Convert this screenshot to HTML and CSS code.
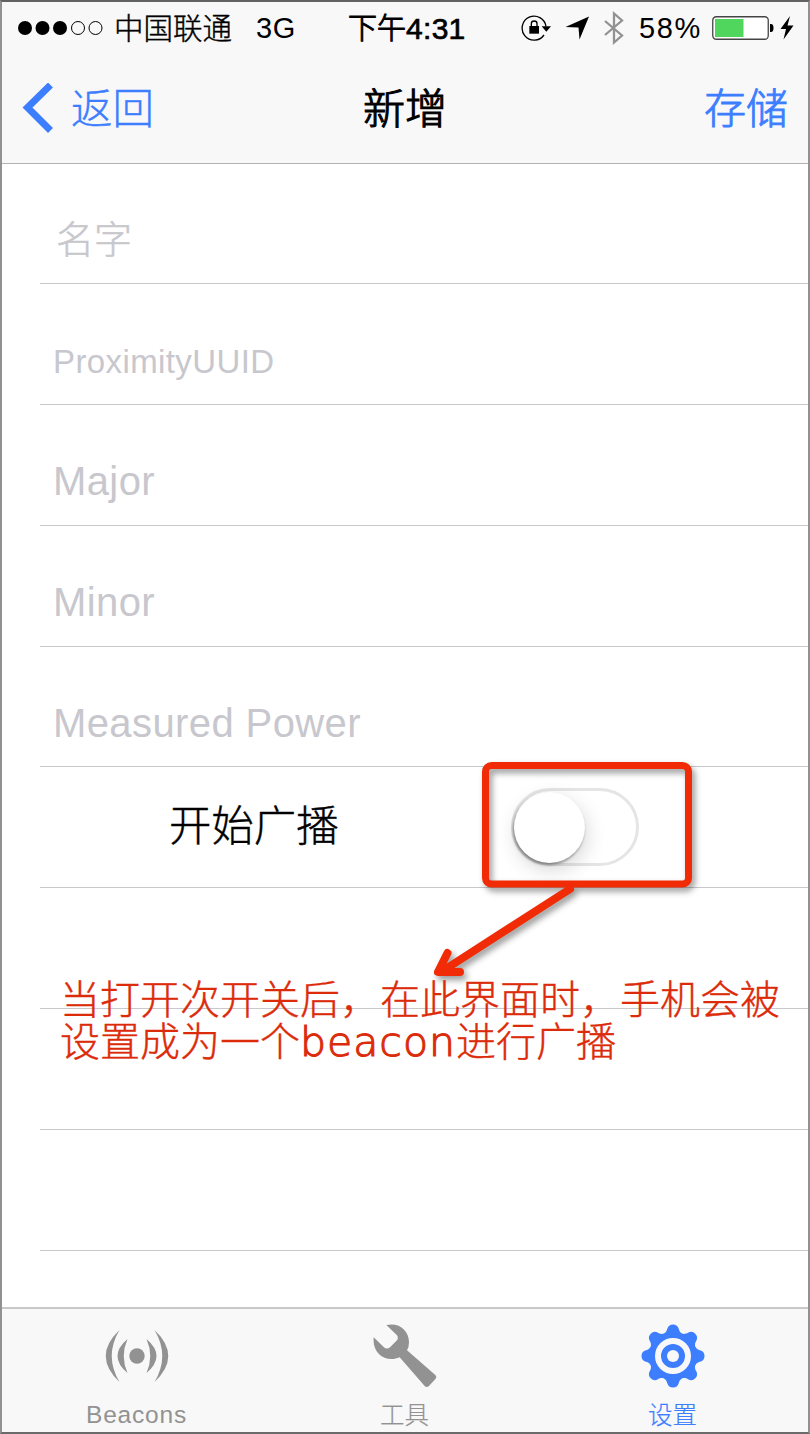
FILE: index.html
```html
<!DOCTYPE html>
<html lang="zh-CN">
<head>
<meta charset="utf-8">
<title>新增</title>
<link rel="stylesheet" href="styles.css">
</head>
<body>
<div class="screen">
  <header class="header">
    <div class="status">
      <svg class="signal" width="88" height="16" viewBox="0 0 88 16">
        <g fill="#000"><circle cx="8" cy="8" r="7"/><circle cx="25.500" cy="8" r="7"/><circle cx="43" cy="8" r="7"/></g>
        <g fill="none" stroke="#000" stroke-width="1"><circle cx="61" cy="8" r="6.500"/><circle cx="78.500" cy="8" r="6.500"/></g>
      </svg>
      <span class="carrier">中国联通</span>
      <span class="network">3G</span>
      <span class="time">下午<b class="clock">4:31</b></span>
      <svg class="lock" width="30" height="28" viewBox="34 40 90 84">
        <path d="M109 77A36 36 0 1 0 103 103" fill="none" stroke="#000" stroke-width="4"/>
        <path d="M96 77H124L110 93Z"/>
        <path d="M59 76H88V99H59Z"/>
        <path d="M65 77V69Q65 61 73.500 61Q82 61 82 69V77" fill="none" stroke="#000" stroke-width="4"/>
      </svg>
      <svg class="locate" width="24" height="24" viewBox="0 0 24 24"><path d="M.5 11L24 .5L14.500 23.500L13.500 11.500Z"/></svg>
      <svg class="bluetooth" width="22" height="34" viewBox="0 0 22 34"><path d="M2 10L19 24.500L11 31.500V2.500L19 9.500L2 24" fill="none" stroke="#929292" stroke-width="2.300"/></svg>
      <span class="percent">58%</span>
      <svg class="battery" width="63" height="24" viewBox="0 0 63 24">
        <rect x=".75" y=".75" width="55.500" height="22.500" rx="3.500" fill="#fff" stroke="#444" stroke-width="1.300"/>
        <rect x="3" y="3" width="28.500" height="18" fill="#50d65c"/>
        <path d="M58 8H59Q61.500 8 61.500 12T59 16H58Z"/>
      </svg>
      <svg class="bolt" width="14" height="24" viewBox="0 0 14 24"><path d="M10 0L.5 13H6L3.500 23.500L13.500 9.500H7.500Z"/></svg>
    </div>
    <nav class="nav">
      <span class="back">
        <svg width="32" height="50" viewBox="0 0 32 50"><path d="M28.500 2L5.500 24.500L28.500 47.500" fill="none" stroke="#3d7eff" stroke-width="7"/></svg>
        <span class="back-text">返回</span>
      </span>
      <span class="title">新增</span>
      <span class="save">存储</span>
    </nav>
  </header>

  <main class="form">
    <div class="row"><span class="hint cjk">名字</span></div>
    <div class="row"><span class="hint uuid">ProximityUUID</span></div>
    <div class="row"><span class="hint">Major</span></div>
    <div class="row"><span class="hint">Minor</span></div>
    <div class="row"><span class="hint">Measured Power</span></div>
    <div class="row switch-row"><span class="label">开始广播</span><span class="switch"><span class="knob"></span></span></div>
    <div class="row"></div>
    <div class="row"></div>
    <div class="row"></div>
  </main>

  <footer class="tabs">
    <div class="tab">
      <svg width="66" height="66" viewBox="-33 -33 66 66" fill="#929292">
        <circle r="7.700"/>
        <g id="waves"><path d="M-9.500 -17Q-29.500 0 -9.500 17Q-17 0 -9.500 -17Z"/><path d="M-17.500 -26Q-45 0 -17.500 26Q-33 0 -17.500 -26Z"/></g>
        <use href="#waves" transform="scale(-1 1)"/>
      </svg>
      <span class="tab-text en">Beacons</span>
    </div>
    <div class="tab">
      <svg width="66" height="66" viewBox="126 71 198 198"><path fill="#929292" d="M169 77C208 68 237 94 237 128Q237 144 231 153L316 227Q321 232 317 238L296 261Q290 266 284 260L209 174C170 191 126 166 131 114L161 143Q170 152 180 144L201 123Q206 116 201 108Z"/></svg>
      <span class="tab-text">工具</span>
    </div>
    <div class="tab active">
      <svg width="66" height="66" viewBox="-33 -33 66 66" fill="#3d7eff">
        <circle r="24"/>
        <g id="teeth"><path id="tooth" d="M-12 -20C-8 -23 -6.500 -24 -5.800 -27Q-4.500 -31.500 0 -31.500Q4.500 -31.500 5.800 -27C6.500 -24 8 -23 12 -20Z"/><use href="#tooth" transform="rotate(90)"/><use href="#tooth" transform="rotate(180)"/><use href="#tooth" transform="rotate(270)"/></g>
        <use href="#teeth" transform="rotate(45)"/>
        <circle r="15" fill="none" stroke="#f8f8f8" stroke-width="6"/>
        <circle r="6" fill="#f8f8f8"/>
      </svg>
      <span class="tab-text">设置</span>
    </div>
  </footer>

  <svg class="callout" width="270" height="230" viewBox="430 755 270 230">
    <g fill="none" stroke="#f02b05" stroke-linecap="round" stroke-linejoin="round">
      <rect x="485.500" y="765.500" width="203" height="118.500" rx="6" stroke-width="7"/>
      <path d="M570 889L441 972M447.500 953L438 972H460" stroke-width="8"/>
    </g>
  </svg>
  <p class="note">当打开次开关后，在此界面时，手机会被<br>设置成为一个<span class="beacon">beacon</span>进行广播</p>
</div>
</body>
</html>
```
FILE: styles.css
```css
* { box-sizing: border-box; }

body {
  margin: 0;
  font-family: "Liberation Sans", "Noto Sans CJK SC", sans-serif;
  font-weight: 300;
}

svg { display: block; flex: none; }
span { white-space: nowrap; }

.screen {
  position: relative;
  display: flex;
  flex-direction: column;
  width: 810px;
  height: 1434px;
  overflow: hidden;
  background: #fff;
  border: 2px solid #919191;
  border-top-color: #626262;
  border-bottom-color: #6a6a6a;
}

.header {
  height: 162px;
  background: #f8f8f8;
  border-bottom: 1px solid #b2b2b2;
}

.status {
  display: flex;
  align-items: center;
  height: 52px;
  padding-left: 15px;
  font-size: 29px;
  line-height: 52px;
}
.carrier { width: 119px; margin-left: 9px; padding-top: 2px; font-size: 29.5px; -webkit-text-stroke: .4px #000; }
.network { width: 40px; margin-left: 23px; letter-spacing: .6px; }
.time { width: 118px; margin-left: 52px; padding-top: 1px; font-size: 29px; -webkit-text-stroke: 1px #000; }
.clock { font-weight: 400; font-size: 30px; letter-spacing: .3px; -webkit-text-stroke: .7px #000; }
.lock { margin-left: 55px; }
.locate { margin-left: 14px; }
.bluetooth { margin-left: 14px; }
.percent { width: 63px; margin-left: 14px; letter-spacing: 1.6px; }
.battery { margin-left: 10px; }
.bolt { margin-left: 5px; }

.nav {
  display: grid;
  grid-template-columns: 1fr auto 1fr;
  align-items: center;
  height: 108px;
  padding: 0 20px;
  font-size: 42px;
  line-height: 104px;
  color: #3d7eff;
}
.back { display: flex; align-items: center; gap: 17px; }
.back-text { padding-top: 4px; font-size: 41.5px; -webkit-text-stroke: .4px #3d7eff; }
.title { padding-top: 4px; color: #000; -webkit-text-stroke: 1.1px #000; }
.save { justify-self: end; padding-top: 4px; -webkit-text-stroke: .9px #3d7eff; }

.form {
  height: 1143px;
  padding-left: 38px;
}
.row {
  display: flex;
  height: 120.85px;
  padding: 14px 0 0 13px;
  border-bottom: 1px solid #c8c7cc;
  line-height: 124px;
}
.row:first-child { height: 120px; }
.hint { color: #c7c7cd; font-size: 40px; letter-spacing: .4px; }
.hint.cjk { padding-left: 3px; font-size: 38px; letter-spacing: 0; -webkit-text-stroke: .5px #c7c7cd; }
.hint.uuid { padding-top: 2px; font-size: 33px; letter-spacing: .4px; }
.switch-row { align-items: center; padding: 0 0 0 129px; }
.label { width: 170px; font-size: 42.4px; line-height: 120px; -webkit-text-stroke: .4px #000; }
.switch {
  width: 128px;
  height: 78px;
  margin-left: 172px;
  padding-top: 1px;
  border: 3px solid #e5e5e5;
  border-radius: 39px;
}
.knob {
  display: block;
  width: 71px;
  height: 71px;
  border-radius: 50%;
  background: #fff;
  box-shadow: -1px 2px 3px rgba(0, 0, 0, .4), 2px 7px 20px rgba(0, 0, 0, .16);
}

.tabs {
  display: grid;
  grid-template-columns: repeat(3, 268px);
  height: 125px;
  background: #f8f8f8;
  border-top: 2px solid #c8c8c8;
}
.tab {
  display: flex;
  flex-direction: column;
  align-items: center;
  padding: 14px 0 0 1px;
  color: #929292;
}
.tab.active { color: #3d7eff; }
.tab-text { font-size: 24.5px; line-height: 36px; margin-top: 9px; -webkit-text-stroke: .2px currentColor; }
.tab-text.en { margin-top: 8px; letter-spacing: .8px; -webkit-text-stroke: 0; }

.callout {
  position: absolute;
  left: 428px;
  top: 753px;
  filter: drop-shadow(3px 4px 3px rgba(0, 0, 0, .4));
}
.note {
  position: absolute;
  left: 58px;
  top: 977px;
  margin: 0;
  font-size: 40px;
  line-height: 42px;
  color: #dc2b0a;
  white-space: nowrap;
  -webkit-text-stroke: .4px #dc2b0a;
}
.beacon {
  display: inline-block;
  height: 38px;
  font-family: "DejaVu Sans", "DejaVu Sans Light", sans-serif;
  font-weight: 200;
  font-size: 41px;
  line-height: 38px;
  letter-spacing: 1px;
  -webkit-text-stroke: 1.1px #dc2b0a;
}
```
